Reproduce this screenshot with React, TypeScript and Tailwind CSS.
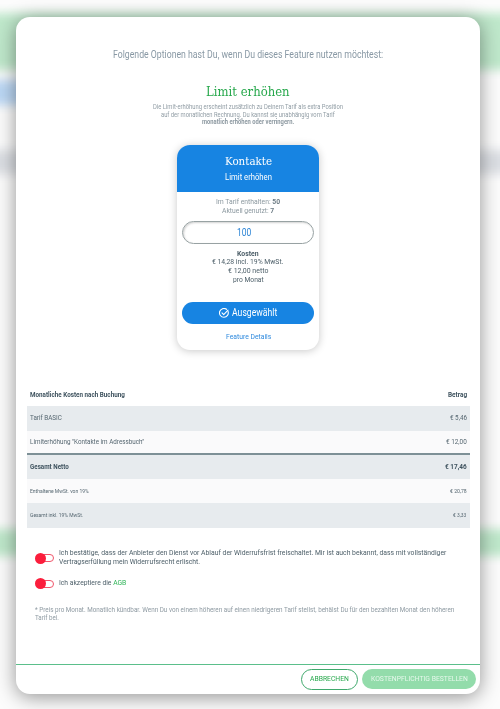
import { useLayoutEffect, useRef, useState, type ReactNode } from "react";

/* A single line of text condensed horizontally to a given width. */
function Line({ w, className = "", children }: { w: number; className?: string; children: ReactNode }) {
  const ref = useRef<HTMLSpanElement>(null);
  const [scale, setScale] = useState(1);
  useLayoutEffect(() => {
    if (ref.current) setScale(w / ref.current.offsetWidth);
  }, [w]);
  return (
    <span className={`block shrink-0 whitespace-nowrap ${className}`} style={{ width: w }}>
      <span ref={ref} className="inline-block origin-left align-top" style={{ transform: `scaleX(${scale})` }}>
        {children}
      </span>
    </span>
  );
}

const SLAB = "font-['Roboto_Slab','DejaVu_Serif',serif]";

function Backdrop() {
  return (
    <div className="col-start-1 row-start-1 flex h-[709px] flex-col overflow-hidden bg-[#fcfcfc]">
      <div className="-mx-10 flex flex-col blur-[5px]">
        <div className="h-[13px]" />
        <div className="h-[57px] bg-[#bfe8cb]" />
        <div className="h-[10px]" />
        <div className="h-[25px] w-[300px] bg-[#bcd8f5]" />
        <div className="h-[45px]" />
        <div className="h-[24px] bg-[#dcdfe4]" />
        <div className="h-[355px]" />
        <div className="h-[27px] bg-[#bfe8cb]" />
      </div>
    </div>
  );
}

function Card() {
  return (
    <div className="flex h-[205px] w-[142px] flex-col items-center overflow-hidden rounded-[13px] bg-white shadow-[0_1px_9px_rgba(0,0,0,0.22)]">
      <div className="flex h-[47px] w-full shrink-0 flex-col items-center bg-[#1784e2] pt-[9px] text-white">
        <Line w={47} className={`${SLAB} text-[11.4px] leading-[15px]`}>Kontakte</Line>
        <Line w={47} className="text-[9px] leading-[16px]">Limit erhöhen</Line>
      </div>
      <div className="flex flex-col items-center pt-[6px] text-[8px] leading-[8.8px] text-[#8b989f]">
        <Line w={64.5}>Im Tarif enthalten: <b className="text-[#6c7b84]">50</b></Line>
        <Line w={52.5}>Aktuell genutzt: <b className="text-[#6c7b84]">7</b></Line>
      </div>
      <div className="mt-[4.5px] flex h-[23px] w-[132px] shrink-0 items-center rounded-full border border-[#98a2a3] pt-px pl-[54px] text-[#2f86d6] shadow-[inset_1px_1px_2px_rgba(0,0,0,0.18)]">
        <Line w={14.5} className="text-[10px] leading-[12px]">100</Line>
      </div>
      <div className="flex flex-col items-center pt-[6px] text-[8px] leading-[8.8px] text-[#4c5e68]">
        <Line w={21.5} className="font-bold">Kosten</Line>
        <Line w={71.5}>€ 14,28 incl. 19% MwSt.</Line>
        <Line w={40}>€ 12,00 netto</Line>
        <Line w={31}>pro Monat</Line>
      </div>
      <div className="mt-[17px] flex h-[22.5px] w-[132px] shrink-0 items-center justify-center gap-[2.5px] rounded-full bg-[#1784e2] text-white">
        <svg viewBox="0 0 20 20" className="size-[10px]" fill="none" stroke="currentColor" strokeWidth="2.2" strokeLinecap="round" strokeLinejoin="round">
          <path d="M18.1 6.8A8.8 8.8 0 1 1 15 2.6" />
          <path d="M6 9.6l3.4 3.6L18 4.2" />
        </svg>
        <Line w={45} className="pt-px text-[10.4px] leading-[14px]">Ausgewählt</Line>
      </div>
      <Line w={45} className="mt-[8px] text-[8px] leading-[10px] text-[#2f8ade]">Feature Details</Line>
    </div>
  );
}

function Row({ label, lw, value, vw, className }: { label: string; lw: number; value: string; vw: number; className: string }) {
  return (
    <div className={`flex shrink-0 items-center justify-between pr-[3px] pl-[2.5px] ${className}`}>
      <Line w={lw}>{label}</Line>
      <Line w={vw}>{value}</Line>
    </div>
  );
}

function Toggle() {
  return (
    <span className="flex h-[11px] w-[19px] shrink-0 items-center">
      <span className="z-10 size-[11px] shrink-0 rounded-full bg-[#fb1e3c]" />
      <span className="-ml-[8px] h-[8px] w-[16px] shrink-0 rounded-full border border-[#f0566b]" />
    </span>
  );
}

export default function App() {
  return (
    <div className="grid h-[709px] w-[500px] overflow-hidden font-['Roboto','Liberation_Sans',sans-serif]">
      <Backdrop />
      <main className="z-10 col-start-1 row-start-1 mt-[17.3px] ml-4 flex h-[676.7px] w-[464.3px] flex-col rounded-[14px] bg-white shadow-[0_3px_20px_rgba(0,0,0,0.42)]">
        <header className="flex flex-col items-center pt-[30.5px]">
          <Line w={270} className="text-[10.4px] leading-[14px] text-[#8898a4]">
            Folgende Optionen hast Du, wenn Du dieses Feature nutzen möchtest:
          </Line>
          <Line w={84} className={`${SLAB} mt-[21.5px] text-[13.2px] leading-[18px] text-[#27a84c]`}>Limit erhöhen</Line>
          <div className="mt-[2.5px] flex flex-col items-center text-[7px] leading-[7.7px] text-[#909ca4]">
            <Line w={190}>Die Limit-erhöhung erscheint zusätzlich zu Deinem Tarif als extra Position</Line>
            <Line w={174}>auf der monatlichen Rechnung. Du kannst sie unabhängig vom Tarif</Line>
            <Line w={92} className="font-bold text-[#8d99a1]">monatlich erhöhen oder verringern.</Line>
          </div>
        </header>
        <section className="mt-[18.5px] flex justify-center">
          <Card />
        </section>
        <section className="mt-[31.5px] ml-[11px] flex w-[442.5px] flex-col text-[7.8px] leading-[10px] text-[#566771]">
          <Row className="h-[24px] pt-[2px] font-bold text-[#3f535f]" label="Monatliche Kosten nach Buchung" lw={94.5} value="Betrag" vw={19} />
          <Row className="h-[25px] bg-[#e7ebee]" label="Tarif BASIC" lw={31.5} value="€ 5,46" vw={17} />
          <Row className="h-[22.5px] bg-[#fafafb]" label={'Limiterhöhung "Kontakte im Adressbuch"'} lw={114.5} value="€ 12,00" vw={20.5} />
          <Row className="h-[26px] border-t-2 border-[#7d9096] bg-[#e7ebee] font-bold text-[#3f535f]" label="Gesamt Netto" lw={38.5} value="€ 17,46" vw={21.5} />
          <Row className="h-[23.5px] bg-[#fafafb] text-[6.2px]" label="Enthaltene MwSt. von 19%" lw={59} value="€ 20,78" vw={16.5} />
          <Row className="h-[25px] bg-[#e7ebee] text-[6.2px]" label="Gesamt inkl. 19% MwSt." lw={53} value="€ 3,33" vw={13.5} />
        </section>
        <section className="mt-[21.5px] flex flex-col pl-[19px] text-[8px] leading-[8.8px] text-[#4c5e68]">
          <div className="flex items-center gap-[5px]">
            <Toggle />
            <div>
              <Line w={387}>Ich bestätige, dass der Anbieter den Dienst vor Ablauf der Widerrufsfrist freischaltet. Mir ist auch bekannt, dass mit vollständiger</Line>
              <Line w={141}>Vertragserfüllung mein Widerrufsrecht erlischt.</Line>
            </div>
          </div>
          <div className="mt-[11px] flex items-center gap-[5px]">
            <Toggle />
            <Line w={67.5}>Ich akzeptiere die <span className="text-[#2fb457]">AGB</span></Line>
          </div>
          <div className="mt-[17px] text-[7.5px] leading-[8.2px] text-[#8e9aa2]">
            <Line w={419}>* Preis pro Monat. Monatlich kündbar. Wenn Du von einem höheren auf einen niedrigeren Tarif stellst, behälst Du für den bezahlten Monat den höheren</Line>
            <Line w={24}>Tarif bei.</Line>
          </div>
        </section>
        <footer className="mt-auto flex h-[30px] items-center justify-end gap-[4px] border-t border-[#5bbf8b] pr-[4px] text-[8px] leading-[12px]">
          <button className="flex h-[21px] w-[57px] items-center justify-center rounded-full border border-[#3fa96c] text-[#27a84c]">
            <Line w={39}>ABBRECHEN</Line>
          </button>
          <button className="flex h-[20px] w-[114px] items-center justify-center rounded-full bg-[#93dcab] text-[#e6f8ec]">
            <Line w={97}>KOSTENPFLICHTIG BESTELLEN</Line>
          </button>
        </footer>
      </main>
    </div>
  );
}
